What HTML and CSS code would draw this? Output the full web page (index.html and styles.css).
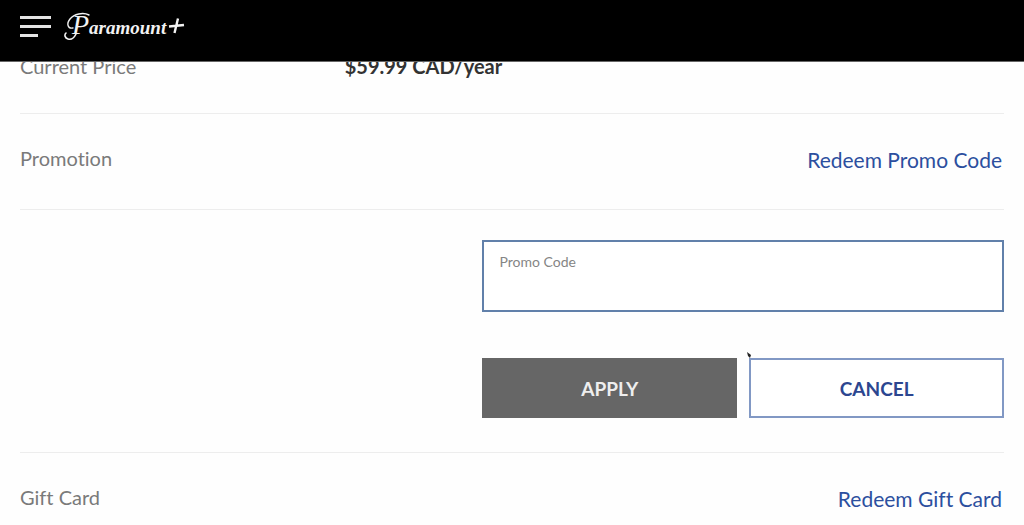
FILE: index.html
```
<!DOCTYPE html>
<html lang="en">
<head>
  <meta charset="UTF-8">
  <meta name="viewport" content="width=device-width, initial-scale=1.0">
  <title>Paramount+ Account</title>
  <link rel="stylesheet" href="styles.css">
</head>
<body>
  <header class="topbar">
    <button class="menu" type="button" aria-label="Menu">
      <svg width="32" height="24" viewBox="0 0 32 24" fill="#e4e4e4">
        <rect x="0" y="1" width="31" height="3"/>
        <rect x="0" y="10" width="31" height="3"/>
        <rect x="0" y="19" width="18" height="3"/>
      </svg>
    </button>
    <a class="logo" href="#" aria-label="Paramount+">
      <!-- swash around the P -->
      <svg class="swash" width="30" height="30" viewBox="0 0 30 30" fill="none" stroke="#f2f2f2" stroke-linecap="round">
        <path d="M9 16C4 17 2 12 6 7C10 2 19 0 25 3" stroke-width="1.4"/>
        <path d="M12 22C10 26 7 28 4 27C1 26 0 23 2 21" stroke-width="1.6"/>
      </svg>
      <span class="wordmark"><span class="initial">P</span>aramount</span>
      <svg class="plus" width="17" height="16" viewBox="0 0 17 16" fill="none" stroke="#f2f2f2">
        <path d="M1 8.500L16 7M10 0.500L6.500 15" stroke-width="2.4"/>
      </svg>
    </a>
  </header>

  <main class="account">
    <section class="row price-row">
      <span class="label">Current Price</span>
      <span class="price">$59.99 CAD/year</span>
    </section>

    <section class="row">
      <span class="label">Promotion</span>
      <a class="action" href="#">Redeem Promo Code</a>
    </section>

    <section class="promo">
      <form class="promo-form">
        <div class="field">
          <label for="promo">Promo Code</label>
          <input type="text" id="promo" name="promo">
        </div>
        <div class="buttons">
          <button class="btn apply" type="submit">APPLY</button>
          <button class="btn cancel" type="button">CANCEL
            <svg class="pointer" width="5" height="6" viewBox="0 0 5 6"><path d="M0 0L4 3L3 6L1 4Z" fill="#222"/></svg>
          </button>
        </div>
      </form>
    </section>

    <section class="row">
      <span class="label">Gift Card</span>
      <a class="action" href="#">Redeem Gift Card</a>
    </section>
  </main>
</body>
</html>
```
FILE: styles.css
```
* {
  box-sizing: border-box;
}

body {
  margin: 0;
  background: #fefefe;
  color: #333;
  font-family: Lato, "Liberation Sans", sans-serif;
  font-size: 20px;
  font-variant-ligatures: none;
  overflow: hidden;
}

/* header */
.topbar {
  position: fixed;
  top: 0;
  left: 0;
  right: 0;
  z-index: 10;
  display: flex;
  align-items: flex-start;
  gap: 12px;
  height: 62px;
  padding: 8px 20px;
  background: #000;
  border-bottom: 1px solid #666;
}

.menu {
  height: 38px;
  padding: 0;
  border: 0;
  background: none;
}

.menu svg {
  display: block;
}

.logo {
  position: relative;
  display: flex;
  align-items: center;
  gap: 2px;
  height: 36px;
  padding-left: 8px;
  color: #f2f2f2;
  text-decoration: none;
}

.wordmark {
  font-family: "Liberation Serif", serif;
  font-size: 19px;
  font-style: italic;
  font-weight: bold;
  line-height: 28px;
}

.initial {
  font-size: 28px;
  font-weight: normal;
}

.swash {
  position: absolute;
  left: 0;
  top: 4px;
}

/* account rows */
.account {
  padding: 22px 20px 0;
}

.row {
  display: flex;
  align-items: flex-start;
  justify-content: space-between;
  padding: 32px 0 35px;
  border-bottom: 1px solid #ededed;
}

.row:last-child {
  border-bottom: 0;
}

.price-row {
  justify-content: flex-start;
}

.label {
  color: #7a7a7a;
  line-height: 24px;
}

.price {
  font-weight: bold;
  line-height: 24px;
}

.price-row .label {
  width: 33%;
}

.action {
  padding-right: 2px;
  color: #2c4f9e;
  font-size: 21px;
  line-height: 28px;
  text-decoration: none;
}

/* promo code form */
.promo {
  padding: 30px 0 34px;
  border-bottom: 1px solid #ededed;
}

.promo-form {
  width: 53%;
  margin-left: auto;
}

.field {
  display: flex;
  flex-direction: column;
  height: 72px;
  padding: 11px 15px 4px;
  border: 2px solid #6180aa;
  background: #fff;
}

.field label {
  color: #858585;
  font-size: 14px;
  line-height: 18px;
}

.field input {
  width: 100%;
  height: 32px;
  padding: 0;
  border: 0;
  outline: 0;
  background: none;
  font: inherit;
}

.buttons {
  display: flex;
  align-items: flex-start;
  gap: 12px;
  margin-top: 46px;
}

.btn {
  position: relative;
  flex: 1;
  height: 60px;
  padding: 0;
  border: 2px solid #666;
  font: bold 19px Lato, "Liberation Sans", sans-serif;
}

.apply {
  background: #666;
  color: #eee;
}

.cancel {
  border-color: #8198c4;
  background: #fff;
  color: #2c4690;
}

.pointer {
  position: absolute;
  left: -4px;
  top: -8px;
}
```
